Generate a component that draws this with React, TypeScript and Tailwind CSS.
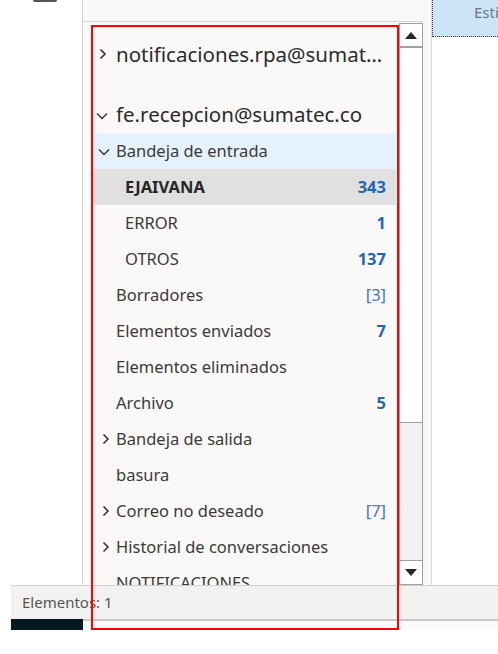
import React from "react";

type Folder = {
  name: string;
  count?: string;
  bracket?: boolean;
  chevron?: "right" | "down";
  indent?: boolean;
  bold?: boolean;
  bg?: string;
};

const folders: Folder[] = [
  { name: "Bandeja de entrada", chevron: "down", bg: "bg-[#e5f1fb]" },
  { name: "EJAIVANA", count: "343", indent: true, bold: true, bg: "bg-[#e0e0e0]" },
  { name: "ERROR", count: "1", indent: true },
  { name: "OTROS", count: "137", indent: true },
  { name: "Borradores", count: "[3]", bracket: true },
  { name: "Elementos enviados", count: "7" },
  { name: "Elementos eliminados" },
  { name: "Archivo", count: "5" },
  { name: "Bandeja de salida", chevron: "right" },
  { name: "basura" },
  { name: "Correo no deseado", count: "[7]", bracket: true, chevron: "right" },
  { name: "Historial de conversaciones", chevron: "right" },
  { name: "NOTIFICACIONES" },
];

function ChevronRight({ className = "" }: { className?: string }) {
  return (
    <svg width="8" height="12" viewBox="0 0 8 12" className={className}>
      <polyline points="1.5,1.5 6,6 1.5,10.5" fill="none" stroke="#333" strokeWidth="1.6" />
    </svg>
  );
}

function ChevronDown({ className = "" }: { className?: string }) {
  return (
    <svg width="12" height="8" viewBox="0 0 12 8" className={className}>
      <polyline points="1,1.5 6,6.5 11,1.5" fill="none" stroke="#333" strokeWidth="1.4" />
    </svg>
  );
}

function FolderRow({ f }: { f: Folder }) {
  return (
    <div className={`relative flex h-[36px] items-center pr-[10px] ${f.bg ?? ""}`}>
      {f.chevron === "down" && <ChevronDown className="absolute left-[5px] top-[15px]" />}
      {f.chevron === "right" && <ChevronRight className="absolute left-[9px] top-[12px]" />}
      <span
        className={`flex-1 truncate text-[16.5px] text-[#3b3a39] ${f.indent ? "pl-[32px]" : "pl-[23px]"} ${
          f.bold ? "font-bold text-[#262626]" : ""
        }`}
      >
        {f.name}
      </span>
      {f.count && (
        <span
          className={`text-[16.5px] ${f.bracket ? "font-normal text-[#3f7cc4]" : "font-bold text-[#2566b3]"}`}
        >
          {f.count}
        </span>
      )}
    </div>
  );
}

function Scrollbar() {
  return (
    <div className="mt-[1px] flex w-[24px] shrink-0 flex-col border border-[#a0a0a0] bg-[#f2f2f2]">
      <div className="flex h-[24px] items-center justify-center border-b-2 border-[#a0a0a0] bg-white">
        <svg width="12" height="7" viewBox="0 0 12 7">
          <polygon points="0,7 6,0 12,7" fill="#262626" />
        </svg>
      </div>
      <div className="h-[375px] border-b border-[#a0a0a0] bg-white" />
      <div className="flex-1" />
      <div className="flex h-[24px] items-center justify-center border-t border-[#a0a0a0] bg-white">
        <svg width="12" height="7" viewBox="0 0 12 7">
          <polygon points="0,0 12,0 6,7" fill="#262626" />
        </svg>
      </div>
    </div>
  );
}

export default function App() {
  return (
    <div
      className="relative h-[654px] w-[498px] overflow-hidden bg-white"
      style={{ fontFamily: '"Noto Sans", "Open Sans", sans-serif' }}
    >
      <div className="flex h-[585px]">
        {/* left rail */}
        <div className="w-[83px] shrink-0 border-r border-[#d4d4d4]">
          <div className="ml-[33px] h-[2px] w-[24px] rounded-b-[2px] bg-[#555]" />
        </div>

        {/* folder pane */}
        <div className="flex w-[349px] shrink-0 flex-col border-r border-[#d8d8d8] bg-[#faf9f8]">
          <div className="h-[22px] w-[340px] shrink-0 border-b border-[#d6d6d6]" />
          <div className="flex min-h-0 flex-1">
            <div className="w-[316px] shrink-0 overflow-hidden pl-[8px]">
              <div className="w-[307px] px-[2px] pt-[13px]">
                <div className="relative flex h-[38px] items-center">
                  <ChevronRight className="absolute left-[6px] top-[13px]" />
                  <span className="truncate pl-[23px] pr-[12px] text-[20.5px] text-[#2b2b2b]">
                    notificaciones.rpa@sumatec.co
                  </span>
                </div>
                <div className="h-[22px]" />
                <div className="relative flex h-[38px] items-center">
                  <ChevronDown className="absolute left-[3px] top-[17px]" />
                  <span className="truncate pl-[23px] text-[20.5px] text-[#2b2b2b]">fe.recepcion@sumatec.co</span>
                </div>
                {folders.map((f) => (
                  <FolderRow key={f.name} f={f} />
                ))}
              </div>
            </div>
            <Scrollbar />
          </div>
        </div>

        {/* reading pane edge */}
        <div className="flex-1">
          <div className="h-[37px] border-b border-l border-dotted border-[#333] bg-[#cce4f7] pl-[41px] pt-[1px] text-[15px] text-[#6b7886]">
            Estimado
          </div>
        </div>
      </div>

      {/* status bar */}
      <div className="ml-[11px] flex h-[34px] items-center border-t border-[#cfcfcf] bg-[#f3f2f1] pl-[11px] text-[15px] text-[#555]">
        Elementos: 1
      </div>
      <div className="ml-[11px] flex h-[11px]">
        <div className="w-[72px] bg-[#031a23]" />
        <div className="flex-1 border-t-2 border-[#c8c8c8] bg-[#fafafa]" />
      </div>

      {/* red annotation box */}
      <div className="pointer-events-none absolute left-[91px] top-[25px] h-[605px] w-[308px] border-2 border-[#ff0000]" />
    </div>
  );
}
